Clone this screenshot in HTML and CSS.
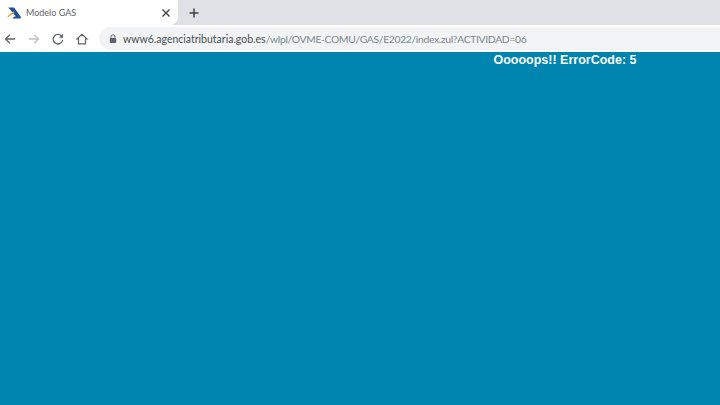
FILE: index.html
```html
<!DOCTYPE html>
<html lang="es">
<head>
    <meta charset="UTF-8">
    <title>Modelo GAS</title>
    <link rel="stylesheet" href="styles.css">
</head>
<body>
    <!-- pestañas -->
    <div class="tabstrip">
        <div class="tab">
            <svg class="favicon" width="14" height="14" viewBox="0 0 16 16">
                <path d="M1.500 1.700H8l7.700 10.600v2H6l2.500-2.200h1.700z" fill="#1f4e9c"/>
                <path d="M1 12.300L8 6.600" stroke="#e8a33a" stroke-width="1.800" fill="none"/>
            </svg>
            <span class="tab-title">Modelo GAS</span>
            <svg class="tab-close" width="10" height="10" viewBox="0 0 10 10">
                <path d="M1.500 1.500l7 7M8.500 1.500l-7 7" stroke="#3c4043" stroke-width="1.400" fill="none"/>
            </svg>
        </div>
        <svg class="new-tab" width="12" height="12" viewBox="0 0 12 12">
            <path d="M6 1.500v9M1.500 6h9" stroke="#3c4043" stroke-width="1.500" fill="none"/>
        </svg>
    </div>

    <!-- barra de direcciones -->
    <div class="toolbar">
        <svg class="nav-icon" width="14" height="14" viewBox="0 0 14 14">
            <path d="M12 7H2.500M6.800 2.700L2.500 7l4.300 4.300" stroke="#5f6368" stroke-width="1.300" fill="none"/>
        </svg>
        <svg class="nav-icon" width="14" height="14" viewBox="0 0 14 14">
            <path d="M2 7h9.500M7.200 2.700L11.500 7l-4.300 4.300" stroke="#bdc1c6" stroke-width="1.300" fill="none"/>
        </svg>
        <svg class="nav-icon" width="14" height="14" viewBox="0 0 14 14">
            <path d="M10.900 4.400A4.800 4.800 0 1 0 11.700 8" stroke="#5f6368" stroke-width="1.300" fill="none"/>
            <path d="M12 1.800v4H8z" fill="#5f6368"/>
        </svg>
        <svg class="nav-icon" width="14" height="14" viewBox="0 0 14 14">
            <path d="M7 2.200L2 6.800h1.500v5h7v-5H12z" stroke="#5f6368" stroke-width="1.200" fill="none"/>
        </svg>
        <div class="omnibox">
            <svg class="lock" width="10" height="12" viewBox="0 0 10 12">
                <path d="M3 5V3.800a2 2 0 0 1 4 0V5" stroke="#5f6368" stroke-width="1" fill="none"/>
                <rect x="1.800" y="5" width="6.400" height="5" rx="1" fill="#5f6368"/>
            </svg>
            <span class="url"><span class="host">www6.agenciatributaria.gob.es</span>/wlpl/OVME-COMU/GAS/E2022/index.zul?ACTIVIDAD=06</span>
        </div>
    </div>

    <!-- contenido -->
    <div class="page">
        <div class="error-msg">Ooooops!! ErrorCode: 5</div>
    </div>
</body>
</html>
```

FILE: styles.css
```css
html, body {
    margin: 0;
    height: 100%;
}
body {
    display: flex;
    flex-direction: column;
    height: 405px;
    overflow: hidden;
    font-family: Lato, "Open Sans", sans-serif;
}
.tabstrip {
    display: flex;
    align-items: center;
    height: 25px;
    background-color: #dee1e6;
}
.tab {
    display: flex;
    align-items: center;
    width: 178px;
    height: 25px;
    box-sizing: border-box;
    padding: 0 7px;
    background-color: #fff;
    border-radius: 0 0 8px 0;
}
.favicon {
    margin-right: 5px;
}
.tab-title {
    flex: 1;
    font-size: 9px;
    color: #5f6368;
}
.new-tab {
    margin-left: 10px;
}
.toolbar {
    display: flex;
    align-items: center;
    height: 27px;
    padding-left: 2.5px;
    background-color: #fff;
}
.nav-icon {
    margin-right: 10px;
}
.omnibox {
    display: flex;
    align-items: center;
    flex: 1;
    height: 23px;
    padding-left: 9px;
    background-color: #f1f3f4;
    border-radius: 12px 0 0 12px;
}
.lock {
    margin-right: 5.5px;
}
.url {
    font-size: 10.3px;
    letter-spacing: -0.3px;
    color: #80868b;
    white-space: nowrap;
}
.host {
    font-size: 10.5px;
    letter-spacing: 0;
    color: #4a4e52;
}
.page {
    flex: 1;
    background-color: #0084b0;
}
.error-msg {
    width: 636.5px;
    text-align: right;
    font-family: "Liberation Sans", Arial, sans-serif;
    font-size: 12.5px;
    font-weight: bold;
    line-height: 16px;
    color: #fff;
}
```
